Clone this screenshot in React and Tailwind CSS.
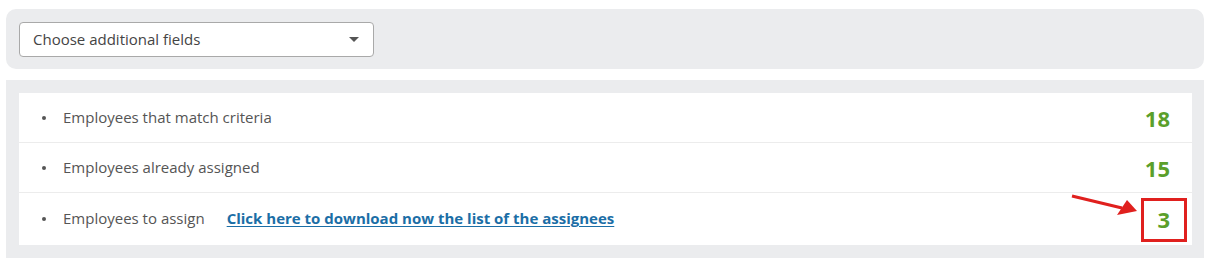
import React from "react";

const font = { fontFamily: '"Open Sans", "Noto Sans", sans-serif' };

function Row({ children, value, last }) {
  return (
    <div
      className={`flex items-center pl-[23px] pr-[22px] ${last ? "h-[51px]" : "h-[50px] border-b border-[#ececec]"}`}
    >
      <span className="w-[4px] h-[4px] rounded-full bg-[#555] mr-[17px] shrink-0" />
      <div className="flex-1 flex items-center text-[15px] text-[#555]">{children}</div>
      <span className="text-[22px] font-bold text-[#5b9f2b] leading-none">{value}</span>
    </div>
  );
}

export default function App() {
  return (
    <div className="w-[1208px] h-[261px] bg-white pt-[9px] pl-[6px] pr-[4px]" style={font}>
      <div className="h-[60px] rounded-[10px] bg-[#ebecee] pl-[13px] pt-[13px]">
        <div className="w-[355px] h-[35px] bg-white border border-[#a9a9a9] rounded-[4px] flex items-center pl-[13px] pr-[14px]">
          <span className="flex-1 text-[15px] text-[#444]">Choose additional fields</span>
          <svg width="10" height="5" viewBox="0 0 10 5">
            <polygon points="0,0 10,0 5,5" fill="#555" />
          </svg>
        </div>
      </div>
      <div className="mt-[11px] h-[178px] bg-[#ebecee] pt-[13px] pl-[13px] pr-[12px]">
        <div className="relative bg-white h-[152px]">
          <Row value="18">Employees that match criteria</Row>
          <Row value="15">Employees already assigned</Row>
          <Row value="3" last>
            <span>Employees to assign</span>
            <a className="ml-[22px] font-bold text-[#1b6ea6] underline underline-offset-2">
              Click here to download now the list of the assignees
            </a>
          </Row>
          <div className="absolute left-[1122px] top-[105px] w-[46px] h-[44px] border-[3px] border-[#e0201e]" />
          <svg className="absolute left-[1049px] top-[97px]" width="75" height="28" viewBox="0 0 75 28">
            <line x1="4" y1="6" x2="54" y2="18" stroke="#e0201e" strokeWidth="3.2" />
            <polygon points="59,10 49,25 69,21" fill="#e0201e" />
          </svg>
        </div>
      </div>
    </div>
  );
}
